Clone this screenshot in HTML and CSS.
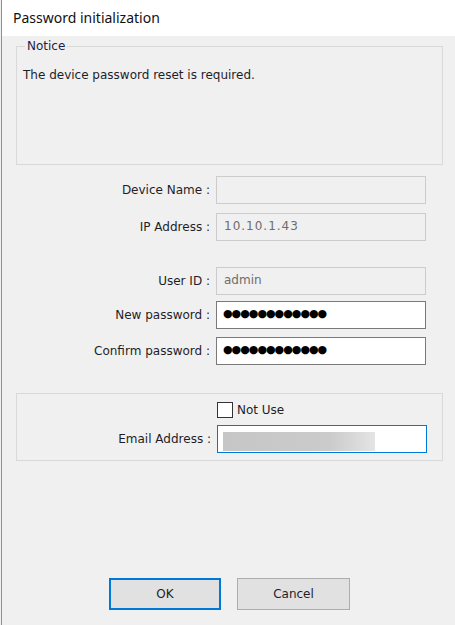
FILE: index.html
```html
<!DOCTYPE html>
<html>
<head>
    <title>Password initialization</title>
    <link rel="stylesheet" href="styles.css">
</head>
<body>
    <div class="ventana">
        <div class="titulo">Password initialization</div>

        <div class="contenido">
            <fieldset class="grupo aviso">
                <legend>Notice</legend>
                <p>The device password reset is required.</p>
            </fieldset>

            <div class="formulario">
                <div class="fila fila-nombre">
                    <label>Device Name :</label>
                    <div class="campo deshabilitado"></div>
                </div>
                <div class="fila fila-ip">
                    <label>IP Address :</label>
                    <div class="campo deshabilitado ip">10.10.1.43</div>
                </div>
                <div class="fila fila-usuario">
                    <label>User ID :</label>
                    <div class="campo deshabilitado">admin</div>
                </div>
                <div class="fila fila-nueva">
                    <label>New password :</label>
                    <div class="campo clave">●●●●●●●●●●●●</div>
                </div>
                <div class="fila fila-confirmar">
                    <label>Confirm password :</label>
                    <div class="campo clave">●●●●●●●●●●●●</div>
                </div>
            </div>

            <div class="grupo correo">
                <div class="fila fila-check">
                    <span class="vacio"></span>
                    <label class="check"><span class="caja"></span>Not Use</label>
                </div>
                <div class="fila fila-correo">
                    <label>Email Address :</label>
                    <div class="campo activo"><span class="borroso"></span></div>
                </div>
            </div>

            <div class="botones">
                <button class="boton principal">OK</button>
                <button class="boton">Cancel</button>
            </div>
        </div>
    </div>
</body>
</html>
```

FILE: styles.css
```css
body {
    margin: 0;
    background-color: #f0f0f0;
    font-family: 'DejaVu Sans', sans-serif;
    font-size: 12px;
    color: #1e1e2a;
}

.ventana {
    height: 625px;
    border-left: 1px solid #5b9be0;
    margin-left: 1px;
    background-color: #f0f0f0;
    box-sizing: border-box;
}

.titulo {
    height: 36px;
    background-color: #ffffff;
    padding-left: 11px;
    font-family: 'Noto Sans', 'Open Sans', sans-serif;
    font-size: 14px;
    line-height: 36px;
    color: #111111;
}

.contenido {
    padding: 0 10px 0 14px;
}

.grupo {
    border: 1px solid #d9d9d9;
    width: 427px;
    box-sizing: border-box;
}

.aviso {
    margin: 3px 0 0 0;
    padding: 0 6px;
    height: 126px;
}

.aviso legend {
    padding: 0 2px;
    margin-left: 2px;
    color: #1e1e4a;
}

.aviso p {
    margin: 15px 0 0 0;
}

.formulario {
    display: flex;
    flex-direction: column;
    margin-top: 11px;
}

.fila {
    display: flex;
    align-items: center;
}

.fila label {
    width: 194px;
    text-align: right;
    margin-right: 6px;
}

.campo {
    width: 210px;
    height: 28px;
    box-sizing: border-box;
    border: 1px solid #cccccc;
    padding: 0 7px;
    line-height: 24px;
}

.deshabilitado {
    background-color: #f0f0f0;
    color: #6d6d6d;
}

.ip {
    letter-spacing: 1px;
}

.clave {
    background-color: #ffffff;
    border-color: #7a7a7a;
    padding: 0 6px;
    font-size: 11px;
    letter-spacing: -1px;
    color: #000000;
}

.fila-ip { margin-top: 9px; }
.fila-usuario { margin-top: 26px; }
.fila-nueva { margin-top: 6px; }
.fila-confirmar { margin-top: 8px; }

.correo {
    margin-top: 28px;
    height: 68px;
    padding-top: 8px;
}

.fila-check .vacio {
    width: 200px;
}

.check {
    display: flex;
    align-items: center;
    text-align: left;
    width: auto;
}

.caja {
    width: 14px;
    height: 14px;
    border: 1px solid #333333;
    background-color: #ffffff;
    margin-right: 4px;
}

.fila-correo {
    margin-top: 7px;
}

.activo {
    background-color: #ffffff;
    border-color: #0078d7;
    padding: 6px 5px;
}

.borroso {
    display: block;
    width: 152px;
    height: 19px;
    background: linear-gradient(to right, #c6c6c6, #cbcbcb 70%, #e4e4e4);
    filter: blur(0.5px);
}

.botones {
    display: flex;
    gap: 16px;
    margin: 117px 0 0 93px;
}

.boton {
    width: 113px;
    height: 32px;
    background-color: #e1e1e1;
    border: 1px solid #adadad;
    font-family: 'DejaVu Sans', sans-serif;
    font-size: 12px;
    color: #1e1e2a;
}

.principal {
    width: 112px;
    border: 2px solid #0078d7;
}
```
